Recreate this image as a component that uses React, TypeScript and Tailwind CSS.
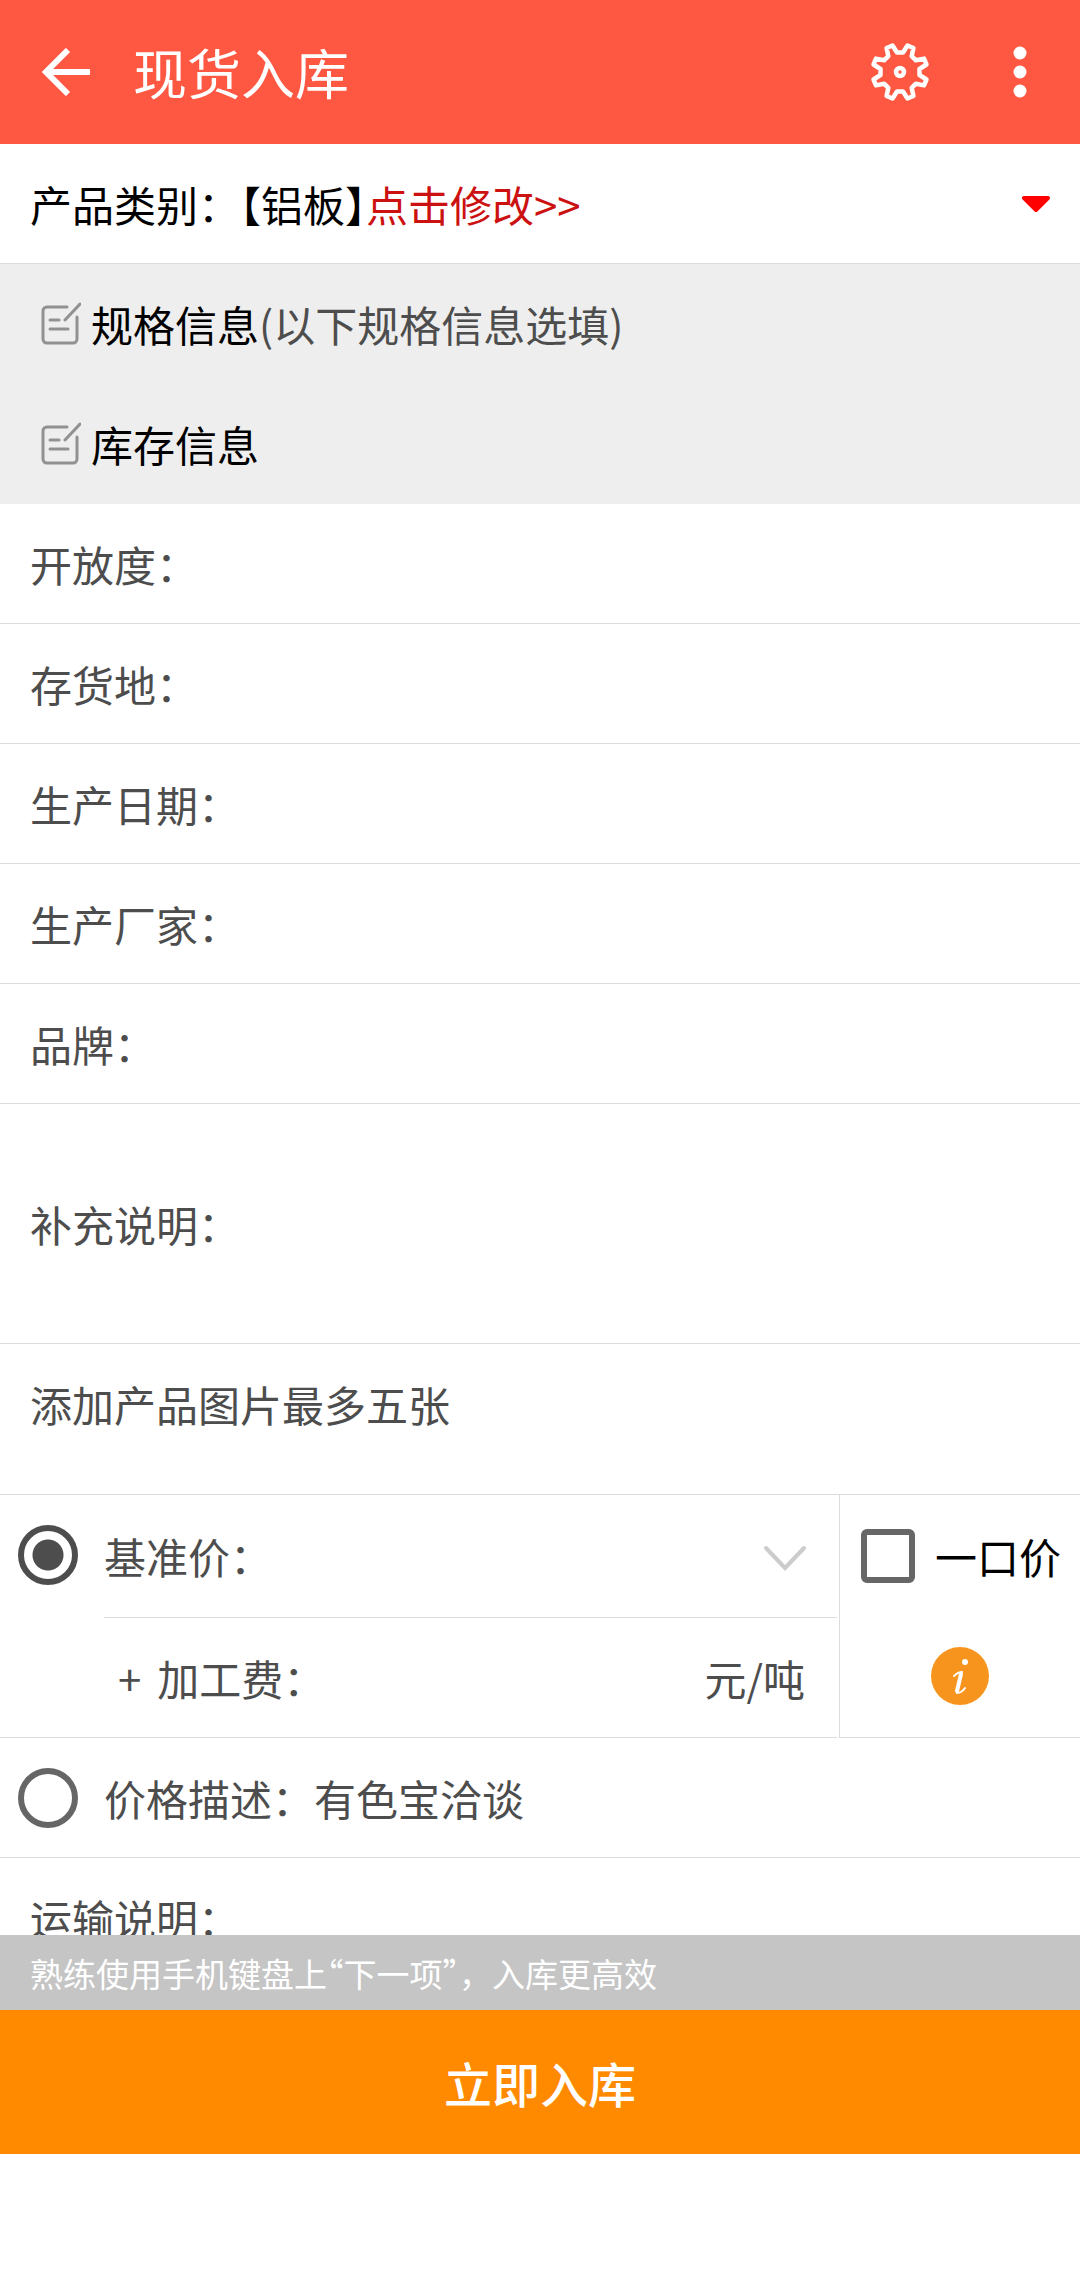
import { useState } from "react";

type FieldRowProps = {
  id: string;
  label: string;
};

const fields: FieldRowProps[] = [
  { id: "openness", label: "开放度：" },
  { id: "location", label: "存货地：" },
  { id: "date", label: "生产日期：" },
  { id: "factory", label: "生产厂家：" },
  { id: "brand", label: "品牌：" },
];

function BackIcon() {
  return (
    <svg className="h-12 w-12" viewBox="0 0 48 48" fill="none" stroke="currentColor" strokeWidth="6">
      <path d="M26 2 4 24l22 22M4 24h44" />
    </svg>
  );
}

function GearIcon() {
  return (
    <svg
      className="h-15 w-15"
      viewBox="-30 -30 60 60"
      fill="none"
      stroke="currentColor"
      strokeWidth="4.5"
      strokeLinejoin="round"
    >
      <path d="M-7.5-26.5-3-19.5H3L7.5-26.5 13.4-24 11.7-15.9 15.9-11.7 24-13.4 26.5-7.5 19.5-3V3L26.5 7.5 24 13.4 15.9 11.7 11.7 15.9 13.4 24 7.5 26.5 3 19.5H-3L-7.5 26.5-13.4 24-11.7 15.9-15.9 11.7-24 13.4-26.5 7.5-19.5 3V-3L-26.5-7.5-24-13.4-15.9-11.7-11.7-15.9-13.4-24Z" />
      <circle r="4" />
    </svg>
  );
}

function MoreIcon() {
  return (
    <svg className="h-15 w-4" viewBox="0 0 16 60" fill="currentColor">
      <circle cx="8" cy="11" r="6.5" />
      <circle cx="8" cy="30" r="6.5" />
      <circle cx="8" cy="49" r="6.5" />
    </svg>
  );
}

function NoteIcon() {
  return (
    <svg
      className="h-11 w-10"
      viewBox="0 0 40 44"
      fill="none"
      stroke="#919191"
      strokeWidth="3"
      strokeLinecap="round"
    >
      <path d="M26 5H6a4 4 0 0 0-4 4v28a4 4 0 0 0 4 4h26a4 4 0 0 0 4-4V15" />
      <path d="M39 2 24 18M9 18h9M9 27h18" />
    </svg>
  );
}

function FieldRow({ id, label }: FieldRowProps) {
  return (
    <div className="flex h-[120px] items-center border-b border-[#dcdcdc] px-[30px]">
      <label htmlFor={id}>{label}</label>
      <input id={id} type="text" className="h-full min-w-0 flex-1 outline-none" />
    </div>
  );
}

export default function App() {
  const [priceMode, setPriceMode] = useState("base");
  const [fixedPrice, setFixedPrice] = useState(false);

  return (
    <div className="flex h-screen flex-col bg-white font-['Noto_Sans_CJK_SC',sans-serif] text-[42px] leading-[60px] text-[#4d4d4d]">
      <header className="flex h-36 shrink-0 items-center bg-[#ff5842] pr-[52px] pl-[42px] text-white">
        <button aria-label="返回">
          <BackIcon />
        </button>
        <h1 className="ml-[43px] flex-1 text-[54px]">现货入库</h1>
        <button aria-label="设置">
          <GearIcon />
        </button>
        <button aria-label="更多" className="ml-[82px]">
          <MoreIcon />
        </button>
      </header>

      <main className="min-h-0 flex-1 overflow-y-auto [scrollbar-width:none]">
        <button className="flex h-[120px] w-full items-center justify-between border-b border-[#dcdcdc] px-[30px] text-black">
          <span>
            产品类别：【铝板<span className="[font-feature-settings:'halt']">】</span>
            <span className="text-[#cc1111]">点击修改&gt;&gt;</span>
          </span>
          <svg className="h-5 w-7" viewBox="0 0 28 20" fill="#f00" stroke="#f00" strokeWidth="4" strokeLinejoin="round">
            <path d="M2 4h24L14 16z" />
          </svg>
        </button>

        <section className="bg-[#eeeeee] pl-[41px] text-black">
          <h2 className="flex h-[120px] items-center gap-[10px]">
            <NoteIcon />
            <span>
              规格信息<span className="text-[#4d4d4d]">(以下规格信息选填)</span>
            </span>
          </h2>
          <h2 className="flex h-[120px] items-center gap-[10px]">
            <NoteIcon />
            <span>库存信息</span>
          </h2>
        </section>

        {fields.map((field) => (
          <FieldRow key={field.id} id={field.id} label={field.label} />
        ))}

        <div className="flex h-60 items-center border-b border-[#dcdcdc] px-[30px]">
          <label htmlFor="remark">补充说明：</label>
          <textarea id="remark" className="h-full min-w-0 flex-1 resize-none outline-none" />
        </div>

        <div className="border-b border-[#dcdcdc] px-[30px] pb-[30px]">
          <button className="flex h-[120px] items-center">添加产品图片最多五张</button>
        </div>

        {/* Price */}
        <div className="flex">
          <div className="flex min-w-0 flex-1 border-b border-[#dcdcdc] pl-[18px]">
            <input
              id="base-price"
              type="radio"
              name="price"
              checked={priceMode === "base"}
              onChange={() => setPriceMode("base")}
              className="mt-[30px] h-15 w-15 shrink-0 appearance-none rounded-full border-6 border-[#666] checked:border-[#4d4d4d] checked:bg-[radial-gradient(circle,#4d4d4d_15px,transparent_16px)]"
            />
            <div className="ml-[26px] min-w-0 flex-1">
              <div className="flex h-[123px] items-center border-b border-[#dcdcdc] pr-[30px]">
                <label htmlFor="base-price" className="flex-1">
                  基准价：
                </label>
                <button aria-label="选择基准价" className="pt-1">
                  <svg
                    className="h-7 w-11"
                    viewBox="0 0 44 28"
                    fill="none"
                    stroke="#cccccc"
                    strokeWidth="4"
                    strokeLinecap="round"
                  >
                    <path d="m3 4 19 20L41 4" />
                  </svg>
                </button>
              </div>
              <div className="flex h-[119px] items-center pr-8 pl-[14px]">
                <label htmlFor="fee" className="flex gap-4">
                  <span>+</span>
                  <span>加工费：</span>
                </label>
                <input id="fee" type="text" className="h-full min-w-0 flex-1 outline-none" />
                <span>元/吨</span>
              </div>
            </div>
          </div>

          <div className="ml-[2px] flex w-[241px] flex-col items-center border-b border-l border-[#dcdcdc]">
            <label className="flex h-[122px] w-full items-center gap-5 pl-[21px] text-black">
              <input
                type="checkbox"
                checked={fixedPrice}
                onChange={() => setFixedPrice(!fixedPrice)}
                className="h-[54px] w-[54px] shrink-0 appearance-none rounded-md border-6 border-[#666] checked:bg-[#666]"
              />
              一口价
            </label>
            <button
              aria-label="价格说明"
              className="mt-[30px] flex h-[58px] w-[58px] items-center justify-center rounded-full bg-[#f7941d] text-white"
            >
              <svg className="h-10 w-10" viewBox="0 0 40 40" fill="none" stroke="currentColor" strokeLinecap="round">
                <circle cx="25" cy="6" r="3" fill="currentColor" stroke="none" />
                <path d="M14 20c2-2 5-4 8-4" strokeWidth="2" />
                <path d="M21 18 17 35" strokeWidth="4" />
                <path d="M17 37c3 0 6-2 8-5" strokeWidth="2" />
              </svg>
            </button>
          </div>
        </div>

        <div className="flex h-[120px] items-center border-b border-[#dcdcdc] pl-[18px]">
          <input
            id="price-desc"
            type="radio"
            name="price"
            checked={priceMode === "desc"}
            onChange={() => setPriceMode("desc")}
            className="h-15 w-15 shrink-0 appearance-none rounded-full border-6 border-[#666] checked:border-[#4d4d4d] checked:bg-[radial-gradient(circle,#4d4d4d_15px,transparent_16px)]"
          />
          <label htmlFor="price-desc" className="ml-[26px]">
            价格描述：有色宝洽谈
          </label>
        </div>

        <FieldRow id="shipping" label="运输说明：" />
      </main>

      <footer className="shrink-0 pb-[126px] text-white">
        <p className="flex h-[75px] items-center bg-[#c5c5c5] px-[30px] text-[33px]">
          <span>
            熟练使用手机键盘上<span className="[font-feature-settings:'halt']">“</span>下一项
            <span className="[font-feature-settings:'halt']">”</span>，入库更高效
          </span>
        </p>
        <button className="h-36 w-full bg-[#ff8a00] text-5xl font-medium">立即入库</button>
      </footer>
    </div>
  );
}
